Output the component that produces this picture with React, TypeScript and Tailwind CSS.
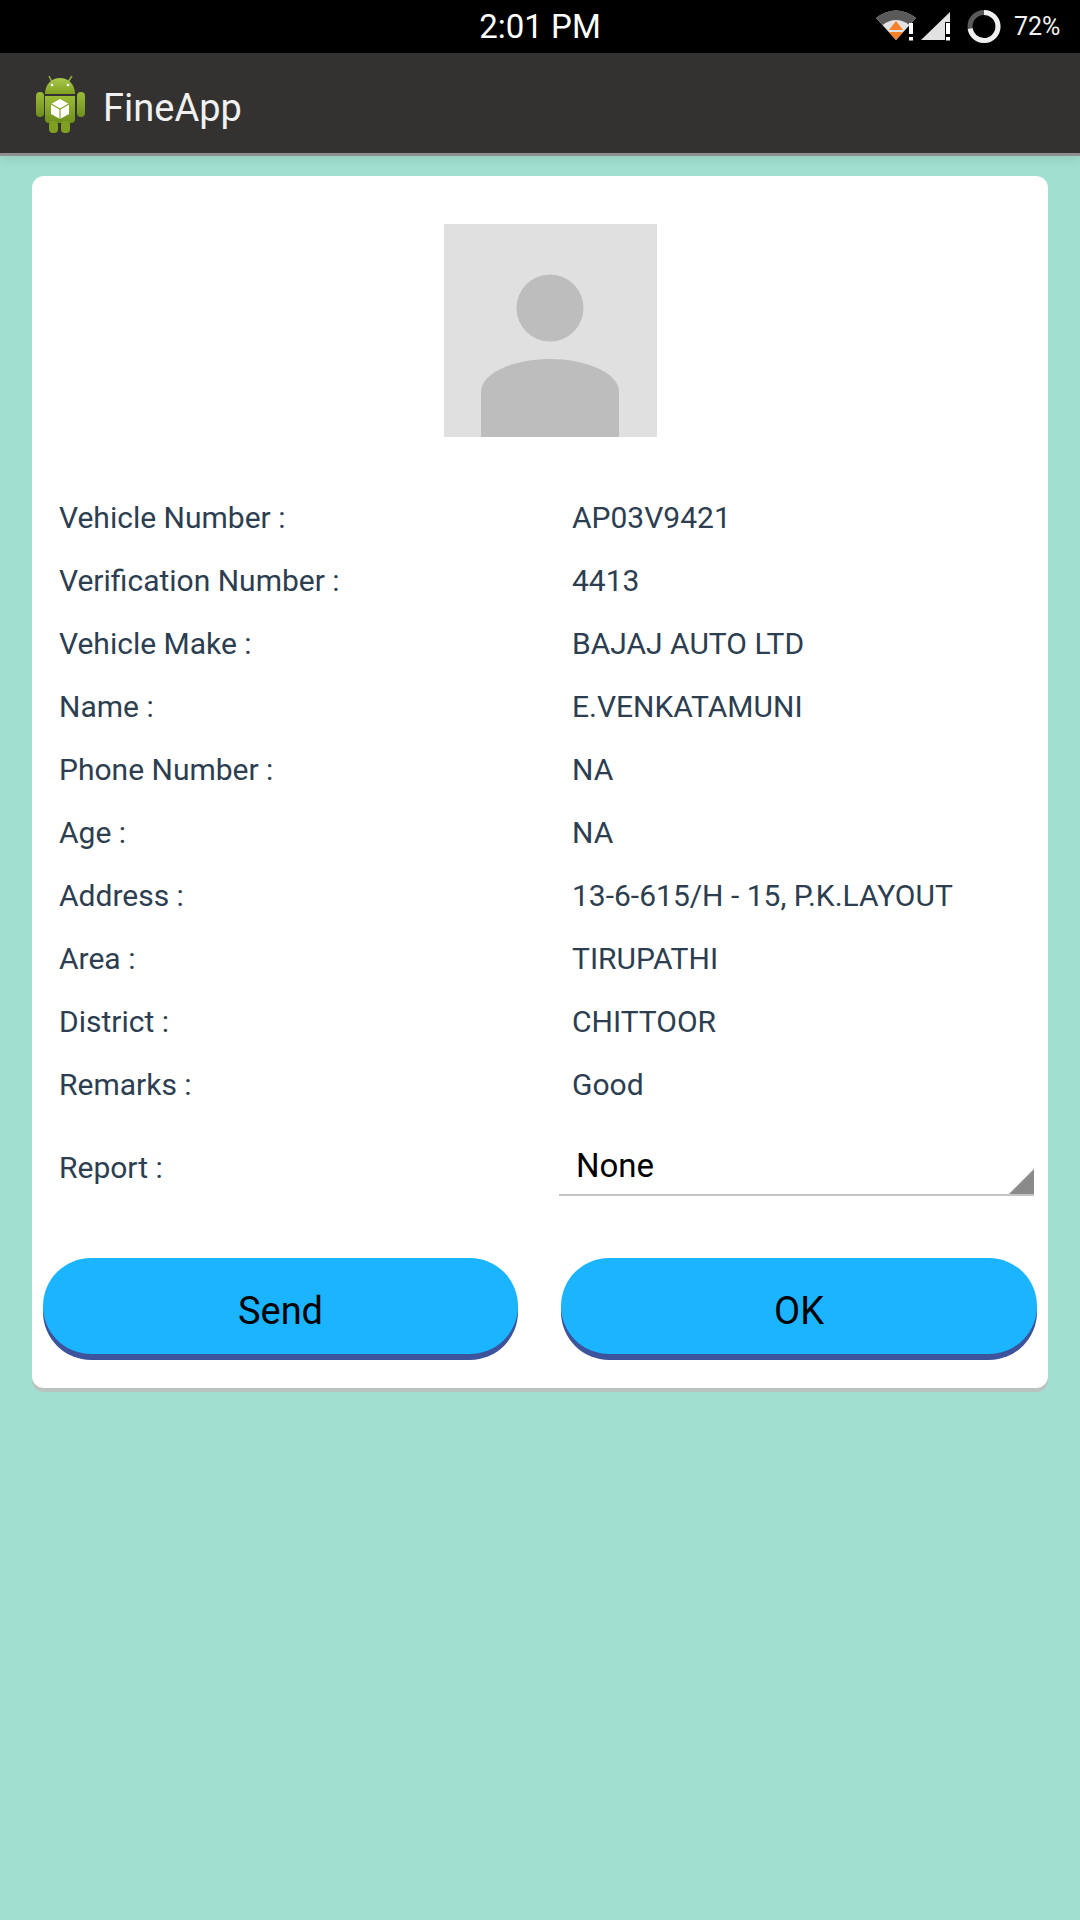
const rows = [
  ["Vehicle Number :", "AP03V9421"],
  ["Verification Number :", "4413"],
  ["Vehicle Make :", "BAJAJ AUTO LTD"],
  ["Name :", "E.VENKATAMUNI"],
  ["Phone Number :", "NA"],
  ["Age :", "NA"],
  ["Address :", "13-6-615/H - 15, P.K.LAYOUT"],
  ["Area :", "TIRUPATHI"],
  ["District :", "CHITTOOR"],
  ["Remarks :", "Good"],
];

function StatusIcons() {
  return (
    <svg width="190" height="53" viewBox="0 0 190 53" className="shrink-0">
      {/* wifi, origin at x=876 */}
      <path d="M0 18 Q20 3 40 18 L20 40 Z" fill="#e2e2e2" />
      <path d="M0 18 Q20 3 40 18 L33.5 25 Q20 15 6.5 25 Z" fill="#5a5a5a" />
      <path d="M20 21 L27 30 L13 30 Z" fill="#f5822a" />
      <path d="M13 32 L27 32 L20 40 Z" fill="#f5822a" />
      <rect x="33" y="23" width="4" height="11" fill="#fff" />
      <rect x="33" y="37" width="4" height="3.5" fill="#fff" />
      {/* signal */}
      <path d="M45 40 L74 12 L74 22 L69 22 L69 40 Z" fill="#e2e2e2" />
      <rect x="70" y="23" width="4" height="11" fill="#fff" />
      <rect x="70" y="37" width="4" height="3.5" fill="#fff" />
      {/* battery ring */}
      <circle cx="108" cy="26.5" r="14" fill="none" stroke="#5a5a5a" strokeWidth="5" />
      <circle
        cx="108"
        cy="26.5"
        r="14"
        fill="none"
        stroke="#f0f0f0"
        strokeWidth="5"
        strokeDasharray="63.3 88"
        transform="rotate(-90 108 26.5)"
      />
    </svg>
  );
}

function AndroidLogo() {
  return (
    <svg width="50" height="58" viewBox="0 0 50 58" className="mt-[2px] shrink-0">
      <defs>
        <linearGradient id="droidHead" x1="0" y1="0" x2="0" y2="1">
          <stop offset="0" stopColor="#a9c94a" />
          <stop offset="1" stopColor="#7f9f22" />
        </linearGradient>
        <linearGradient id="droidBody" x1="0" y1="0" x2="0" y2="1">
          <stop offset="0" stopColor="#9abb35" />
          <stop offset="1" stopColor="#6f8f1e" />
        </linearGradient>
      </defs>
      <path d="M14 1 L17 7 M37 1 L33 7" stroke="#8fa83a" strokeWidth="1.6" />
      <path d="M10 19 C10 9 17 3 25 3 C33 3 40 9 40 19 Z" fill="url(#droidHead)" />
      <circle cx="17" cy="10" r="1.3" fill="#fff" />
      <circle cx="33" cy="10" r="1.3" fill="#fff" />
      <rect x="1" y="17" width="8" height="25" rx="4" fill="url(#droidBody)" />
      <rect x="42" y="17" width="8" height="25" rx="4" fill="url(#droidBody)" />
      <path d="M10 21 H40 V44 Q40 48 36 48 H14 Q10 48 10 44 Z" fill="url(#droidBody)" />
      <rect x="14" y="46" width="9" height="12" rx="4" fill="#7f9f22" />
      <rect x="26" y="46" width="9" height="12" rx="4" fill="#7f9f22" />
      <path d="M25 24 L34 29 V39 L25 44 L16 39 V29 Z" fill="#fff" />
      <path d="M16 29 L25 34 L34 29 M25 34 V44" fill="none" stroke="#86a528" strokeWidth="1.2" />
    </svg>
  );
}

function Avatar() {
  return (
    <svg width="213" height="213" viewBox="0 0 213 213" className="block">
      <rect width="213" height="213" fill="#e0e0e0" />
      <circle cx="106" cy="84" r="33.5" fill="#bdbdbd" />
      <path d="M37 213 V168 C37 148 72 135 106 135 C140 135 175 148 175 168 V213 Z" fill="#bdbdbd" />
    </svg>
  );
}

export default function App() {
  return (
    <div className="flex min-h-[1920px] w-[1080px] flex-col bg-[#a1dfd0] font-['Roboto',sans-serif]">
      <div className="grid h-[53px] grid-cols-[1fr_auto_1fr] items-center bg-black">
        <div />
        <span className="text-[33px] leading-none text-white">2:01 PM</span>
        <div className="flex items-center justify-end pr-[18px]">
          <div className="mr-[-52px]">
            <StatusIcons />
          </div>
          <span className="w-[48px] text-[25px] leading-none text-[#f2f2f2]">72%</span>
        </div>
      </div>

      <div className="relative flex h-[103px] items-center gap-[18px] border-b-[3px] border-[#8f8f8d] bg-[#343230] pl-[35px] shadow-[0_4px_10px_rgba(0,0,0,0.08)]">
        <AndroidLogo />
        <span className="pt-[9px] text-[38px] leading-none text-[#f1f1f1]">FineApp</span>
      </div>

      <div className="mx-[32px] mt-[20px] rounded-[12px] bg-white pb-[34px] shadow-[0_4px_0_#b9c4c0]">
        <div className="flex justify-center pl-[20px] pt-[48px]">
          <Avatar />
        </div>

        <div className="mt-[49px] pl-[27px] pr-[14px]">
          {rows.map(([label, value]) => (
            <div key={label} className="flex h-[63px] items-center text-[30px] text-[#2c3e50]">
              <span className="w-[513px] shrink-0">{label}</span>
              <span>{value}</span>
            </div>
          ))}
          <div className="mt-[22px] flex items-center">
            <span className="w-[500px] shrink-0 text-[30px] text-[#2c3e50]">Report :</span>
            <div className="relative flex h-[58px] w-[475px] items-center border-b-2 border-[#c4c4c4] pl-[17px] text-[33px] text-black">
              None
              <div className="absolute right-0 bottom-0 h-[25px] w-[25px] bg-[#8a8a8a] [clip-path:polygon(100%_0,100%_100%,0_100%)]" />
            </div>
          </div>
        </div>

        <div className="mt-[62px] grid grid-cols-[475px_476px] gap-[43px] px-[11px]">
          {["Send", "OK"].map((t) => (
            <button
              key={t}
              className="h-[96px] rounded-[48px] bg-[#1ab4ff] pt-[10px] text-[38px] text-black shadow-[0_6px_0_#3d549c]"
            >
              {t}
            </button>
          ))}
        </div>
      </div>
    </div>
  );
}
